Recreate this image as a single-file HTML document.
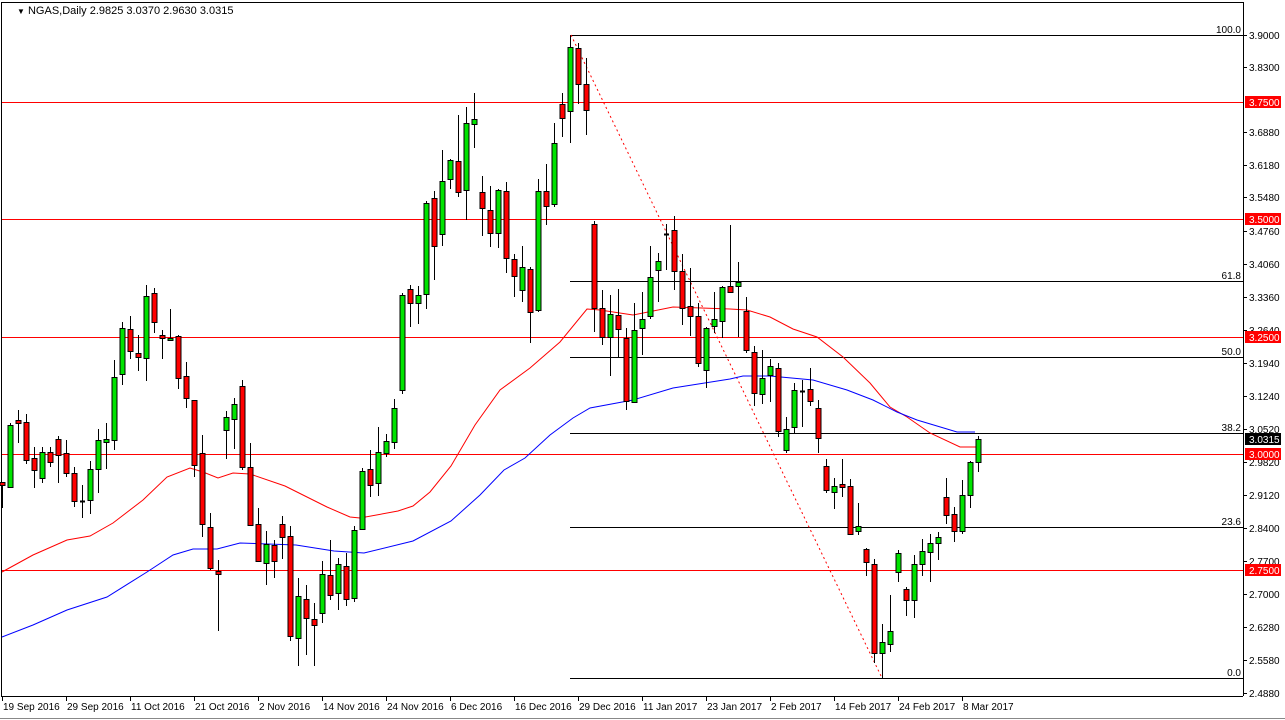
<!DOCTYPE html>
<html><head><meta charset="utf-8"><style>
html,body{margin:0;padding:0;background:#fff;width:1285px;height:720px;overflow:hidden}
svg{display:block;font-family:"Liberation Sans",Tahoma,sans-serif}
</style></head><body>
<svg id="c" width="1285" height="720" viewBox="0 0 1285 720" xmlns="http://www.w3.org/2000/svg">
<rect width="1285" height="720" fill="#fff"/>
<g id="grid"></g>
<g id="cand"></g>
<text x="18" y="14" font-size="11" fill="#000"><tspan x="17" font-size="8">▼</tspan> NGAS,Daily  2.9825 3.0370 2.9630 3.0315</text>
</svg>
<script>
var NS="http://www.w3.org/2000/svg";
function el(p,t,a,txt){var e=document.createElementNS(NS,t);for(var k in a)e.setAttribute(k,a[k]);if(txt!==undefined)e.textContent=txt;p.appendChild(e);return e;}
var g=document.getElementById('grid'),cg=document.getElementById('cand');
el(g,'line',{x1:1.5,y1:2,x2:1.5,y2:696,stroke:'#000'});
el(g,'line',{x1:1,y1:2.5,x2:1243,y2:2.5,stroke:'#000'});
el(g,'line',{x1:1243.5,y1:2,x2:1243.5,y2:696,stroke:'#000'});
el(g,'line',{x1:1,y1:696.5,x2:1243,y2:696.5,stroke:'#000'});
el(g,'line',{x1:0,y1:718.5,x2:1285,y2:718.5,stroke:'#888'});
[102,219,337,454,570].forEach(function(y){el(g,'line',{x1:2,y1:y+.5,x2:1243,y2:y+.5,stroke:'#f00'});});
[[35,'100.0'],[281,'61.8'],[357,'50.0'],[433,'38.2'],[527,'23.6'],[678,'0.0']].forEach(function(f){
el(g,'line',{x1:570,y1:f[0]+.5,x2:1243,y2:f[0]+.5,stroke:'#000'});
el(g,'text',{x:1241,y:f[0]-2,'font-size':10,'text-anchor':'end',fill:'#000'},f[1]);});
el(g,'line',{x1:571,y1:35,x2:882,y2:678,stroke:'#f00','stroke-dasharray':'2,3'});
function pl(pts,col){el(g,'polyline',{points:pts.map(function(p){return p.join(',')}).join(' '),fill:'none',stroke:col,'stroke-width':1});}
pl([[2,572],[33,555],[67,540],[90,536],[113,523],[143,500],[167,477],[190,468],[203,472],[218,478],[233,473],[250,474],[285,486],[327,507],[350,517],[360,518],[398,511],[413,506],[430,492],[451,466],[475,425],[500,390],[530,368],[560,342],[587,309],[600,310],[633,315],[673,307],[730,309],[747,310],[770,317],[793,329],[817,337],[843,357],[870,383],[890,407],[907,417],[930,433],[960,447],[977,447]],'#f00');
pl([[2,637],[33,625],[67,610],[107,597],[147,572],[173,555],[193,549],[217,549],[240,543],[296,545],[334,551],[364,553],[413,541],[451,521],[480,495],[504,470],[525,458],[550,435],[573,418],[590,408],[633,400],[673,388],[730,379],[743,376],[770,376],[813,380],[847,390],[873,400],[897,412],[917,420],[957,432],[975,432]],'#00f');
var C=[[482,508,482,485,'r'],[423,487,425,487,'g'],[410,443,420,423,'r'],[414,464,422,460,'r'],[447,488,458,470,'r'],[447,483,452,478,'g'],[447,467,452,462,'r'],[436,483,439,455,'r'],[440,477,453,473,'r'],[467,507,473,501,'r'],[485,518,501,501,'d'],[461,514,469,500,'g'],[429,493,440,469,'g'],[423,469,439,442,'g'],[360,450,377,440,'g'],[322,385,328,374,'g'],[316,359,329,351,'r'],[335,371,353,357,'r'],[285,381,296,358,'g'],[288,333,293,322,'r'],[330,359,335,338,'r'],[309,340,338,340,'g'],[335,389,336,378,'r'],[362,408,376,398,'r'],[400,477,400,465,'r'],[435,537,453,524,'r'],[513,570,527,568,'r'],[560,631,571,574,'r'],[411,459,417,430,'g'],[398,449,404,419,'g'],[380,470,386,467,'r'],[443,526,467,525,'r'],[508,562,524,561,'r'],[531,585,544,563,'g'],[540,578,545,561,'r'],[516,559,524,537,'r'],[526,641,536,636,'r'],[578,666,596,638,'g'],[585,655,599,618,'r'],[603,666,619,625,'r'],[561,623,574,613,'g'],[540,600,575,595,'r'],[558,610,564,593,'g'],[553,606,566,599,'r'],[526,602,530,598,'g'],[468,529,471,529,'g'],[450,497,469,485,'r'],[427,496,452,483,'g'],[434,457,441,453,'g'],[399,449,408,442,'g'],[293,394,295,390,'g'],[285,327,289,303,'r'],[286,324,295,303,'g'],[201,309,203,294,'g'],[191,280,198,246,'r'],[150,246,181,234,'g'],[159,189,160,179,'g'],[115,197,161,192,'r'],[107,220,123,190,'g'],[93,148,119,124,'g'],[176,236,192,208,'r'],[186,247,210,233,'r'],[189,248,190,233,'g'],[182,273,191,258,'r'],[254,297,259,276,'r'],[246,302,267,290,'g'],[267,343,269,312,'r'],[179,312,191,310,'g'],[164,225,191,206,'r'],[123,207,143,204,'g'],[93,137,104,118,'r'],[36,143,47,111,'g'],[43,104,48,84,'r'],[58,135,84,110,'r'],
[221,332,224,308,'r'],[290,345,308,337,'r'],[295,376,314,337,'g'],[289,357,315,329,'r'],[328,410,338,401,'r'],[303,403,330,402,'g'],[292,355,319,328,'g'],[246,319,277,316,'g'],[253,302,261,270,'g'],[224,270,234,234,'d'],[216,290,230,271,'r'],[254,325,271,308,'r'],[268,336,306,316,'r'],[303,367,316,363,'r'],[327,388,328,370,'g'],[292,333,319,326,'g'],[286,338,287,321,'g'],[225,293,286,292,'r'],[262,337,282,286,'g'],[297,353,311,350,'r'],[346,406,352,393,'r'],[350,404,378,394,'g'],[359,402,366,375,'g'],[363,437,368,431,'r'],[417,453,429,450,'g'],[383,433,390,427,'g'],[380,427,391,391,'d'],[368,406,389,401,'r'],[400,453,408,438,'r'],
[459,493,466,490,'r'],[478,509,486,492,'g'],[459,497,484,487,'r'],[479,535,486,534,'r'],[503,535,526,531,'g'],[548,576,549,562,'r'],[559,663,564,653,'r'],[624,678,642,653,'g'],[595,652,631,644,'g'],[550,582,553,572,'g'],[587,616,589,600,'r'],[555,618,564,600,'g'],[539,576,551,564,'g'],[534,582,543,552,'g'],[532,560,537,543,'g'],[478,524,497,515,'r'],[507,542,514,531,'r'],[480,534,495,531,'g'],[461,508,462,495,'g'],[436,472,439,462,'g']];
var xs=[];for(var i=0;i<74;i++)xs.push(2+8*i);for(var i=74;i<103;i++)xs.push(594+8*(i-74));for(var i=103;i<C.length;i++)xs.push(826+8*(i-103));
C.forEach(function(c,i){var x=xs[i];
el(cg,'line',{x1:x+.5,y1:c[0],x2:x+.5,y2:c[1],stroke:'#000'});
if(c[4]=='d'){el(cg,'line',{x1:x-2,y1:c[2]+.5,x2:x+3,y2:c[2]+.5,stroke:'#000','stroke-width':2});}
else{var h=Math.max(c[3]-c[2],2);el(cg,'rect',{x:x-2,y:c[2]+.5,width:5,height:h,fill:c[4]=='g'?'#00e400':'#f00',stroke:'#000'});}
});
var ticks=[[35,'3.9000'],[67,'3.8300'],[132,'3.6880'],[165,'3.6180'],[197,'3.5480'],[231,'3.4760'],[264,'3.4060'],[297,'3.3360'],[330,'3.2640'],[363,'3.1940'],[396,'3.1240'],[429,'3.0520'],[462,'2.9820'],[495,'2.9120'],[528,'2.8400'],[561,'2.7700'],[594,'2.7000'],[627,'2.6280'],[660,'2.5580'],[693,'2.4880']];
ticks.forEach(function(t){el(g,'line',{x1:1244,y1:t[0]+.5,x2:1247,y2:t[0]+.5,stroke:'#000'});el(g,'text',{x:1249,y:t[0]+4,'font-size':10,fill:'#000'},t[1]);});
[[102,'3.7500'],[219,'3.5000'],[337,'3.2500'],[454,'3.0000'],[570,'2.7500']].forEach(function(t){
el(g,'rect',{x:1245,y:t[0]-6,width:36,height:12,fill:'#f00'});el(g,'text',{x:1249,y:t[0]+4,'font-size':10,fill:'#fff'},t[1]);});
el(g,'rect',{x:1245,y:433,width:36,height:12,fill:'#000'});el(g,'text',{x:1249,y:443,'font-size':10,fill:'#fff'},'3.0315');
var D=['19 Sep 2016','29 Sep 2016','11 Oct 2016','21 Oct 2016','2 Nov 2016','14 Nov 2016','24 Nov 2016','6 Dec 2016','16 Dec 2016','29 Dec 2016','11 Jan 2017','23 Jan 2017','2 Feb 2017','14 Feb 2017','24 Feb 2017','8 Mar 2017'];
D.forEach(function(d,i){var x=2+64*i;el(g,'line',{x1:x+.5,y1:697,x2:x+.5,y2:701,stroke:'#000'});el(g,'text',{x:x+1,y:710,'font-size':10,fill:'#000'},d);});
</script>
</body></html>
